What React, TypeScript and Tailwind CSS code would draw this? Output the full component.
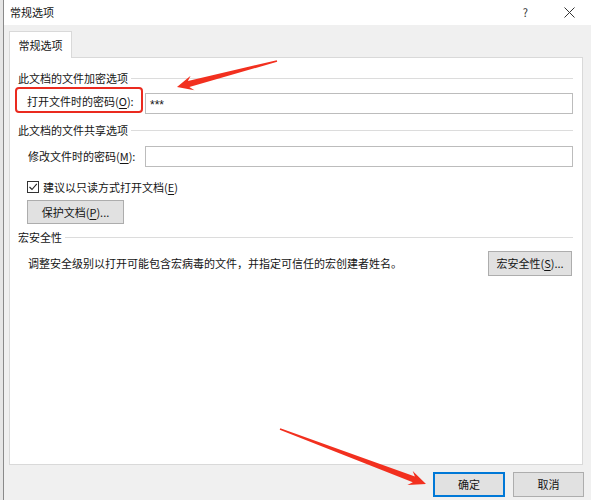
import React from 'react';

type Pt = [number, number];

// tapered annotation arrow: thin tail, wide barbed head
function arrowPoints(tail: Pt, tip: Pt, headLen: number, headW: number, shaftW: number) {
  const dx = tip[0] - tail[0];
  const dy = tip[1] - tail[1];
  const len = Math.hypot(dx, dy);
  const ux = dx / len;
  const uy = dy / len;
  const nx = -uy;
  const ny = ux;
  const bx = tip[0] - ux * headLen;
  const by = tip[1] - uy * headLen;
  const jx = tip[0] - ux * (headLen - 4);
  const jy = tip[1] - uy * (headLen - 4);
  const pts: Pt[] = [
    [tail[0] + nx * 0.8, tail[1] + ny * 0.8],
    [jx + nx * shaftW, jy + ny * shaftW],
    [bx + nx * headW, by + ny * headW],
    tip,
    [bx - nx * headW, by - ny * headW],
    [jx - nx * shaftW, jy - ny * shaftW],
    [tail[0] - nx * 0.8, tail[1] - ny * 0.8],
  ];
  return pts.map((p) => `${p[0].toFixed(1)},${p[1].toFixed(1)}`).join(' ');
}

const Key = ({ k }: { k: string }) => <span className="underline underline-offset-2">{k}</span>;

const GroupHeader = ({ title, className }: { title: string; className?: string }) => (
  <div className={`flex items-center h-[16px] pl-[8px] pr-[9px] ${className ?? ''}`}>
    <span className="whitespace-nowrap">{title}</span>
    <div className="flex-1 h-px bg-[#dcdcdc] ml-[3px]" />
  </div>
);

const Btn = ({ children, className }: { children: React.ReactNode; className?: string }) => (
  <div
    className={`flex items-center justify-center bg-[#e1e1e1] border border-[#adadad] ${className ?? ''}`}
  >
    {children}
  </div>
);

export default function App() {
  return (
    <div
      className="relative w-[591px] h-[500px] overflow-hidden flex bg-[#f0f0f0] text-[11px] leading-none text-[#141414]"
      style={{ fontFamily: '"Noto Sans CJK SC", "Microsoft YaHei", sans-serif' }}
    >
      {/* edge of the window behind */}
      <div className="w-[3px] bg-[#e6e6e6]" />
      <div className="w-px bg-[#8a8a8a]" />

      <div className="flex-1 flex flex-col">
        {/* title bar */}
        <div className="h-[25px] bg-white flex items-center pl-[6px] pr-[16px]">
          <span className="text-[11px]">常规选项</span>
          <div className="flex-1" />
          <span className="text-[11px] text-[#333] mr-[36px]">?</span>
          <svg width="11" height="11" viewBox="0 0 11 11">
            <path d="M0.5 0.5 L10.5 10.5 M10.5 0.5 L0.5 10.5" stroke="#333" strokeWidth="1" />
          </svg>
        </div>

        {/* tab strip */}
        <div className="pt-[6px] pl-[5px]">
          <div className="w-[63px] h-[27px] bg-white border border-b-0 border-[#d9d9d9] flex items-center justify-center relative z-10 -mb-px">
            常规选项
          </div>
        </div>

        {/* tab page */}
        <div className="ml-[5px] mr-[8px] h-[408px] bg-white border border-[#d9d9d9] flex flex-col">
          <GroupHeader title="此文档的文件加密选项" className="mt-[12px]" />

          <div className="flex items-center h-[21px] mt-[7px] pl-[17px] pr-[9px]">
            <span className="w-[118px] whitespace-nowrap -mt-[5px]">
              打开文件时的密码(<Key k="O" />):
            </span>
            <div
              className="flex-1 h-[21px] border border-[#bcbcbc] flex items-center pl-[4px] text-[12px] pt-[3px]"
              style={{ fontFamily: '"Liberation Sans", Arial, sans-serif' }}
            >
              ***
            </div>
          </div>

          <GroupHeader title="此文档的文件共享选项" className="mt-[8px]" />

          <div className="flex items-center h-[21px] mt-[8px] pl-[18px] pr-[9px]">
            <span className="w-[117px] whitespace-nowrap">
              修改文件时的密码(<Key k="M" />):
            </span>
            <div className="flex-1 h-[21px] border border-[#bcbcbc]" />
          </div>

          <div className="flex items-center h-[14px] mt-[13px] pl-[17px]">
            <div className="w-[12px] h-[12px] border border-[#333] flex items-center justify-center">
              <svg width="10" height="10" viewBox="0 0 10 10">
                <path d="M1.5 5 L4 7.5 L8.8 1.8" fill="none" stroke="#222" strokeWidth="1.1" />
              </svg>
            </div>
            <span className="ml-[4px]">
              建议以只读方式打开文档(<Key k="E" />)
            </span>
          </div>

          <div className="mt-[6px] pl-[17px]">
            <Btn className="w-[97px] h-[24px]">
              保护文档(<Key k="P" />)...
            </Btn>
          </div>

          <GroupHeader title="宏安全性" className="mt-[5px]" />

          <div className="flex items-center h-[25px] mt-[6px] pl-[18px] pr-[10px]">
            <span className="flex-1 whitespace-nowrap">
              调整安全级别以打开可能包含宏病毒的文件，并指定可信任的宏创建者姓名。
            </span>
            <Btn className="w-[84px] h-[25px]">
              宏安全性(<Key k="S" />)...
            </Btn>
          </div>
        </div>

        {/* dialog buttons */}
        <div className="flex justify-end gap-[8px] mt-[7px] pr-[7px]">
          <div className="w-[72px] h-[25px] flex items-center justify-center bg-[#e1e1e1] border-2 border-[#0078d7]">
            确定
          </div>
          <Btn className="w-[71px] h-[25px]">取消</Btn>
        </div>
      </div>

      {/* annotations drawn on top of the screenshot */}
      <div className="absolute left-[15px] top-[87px] w-[128px] h-[26px] border-2 border-[#ea2a1f] rounded-[4px] pointer-events-none" />
      <svg className="absolute inset-0 pointer-events-none" width="591" height="500">
        <polygon points={arrowPoints([277, 61], [177, 87], 16, 7.5, 3)} fill="#f2301f" />
        <polygon points={arrowPoints([280, 429], [426, 484], 17, 7.5, 3)} fill="#f2301f" />
      </svg>
    </div>
  );
}
